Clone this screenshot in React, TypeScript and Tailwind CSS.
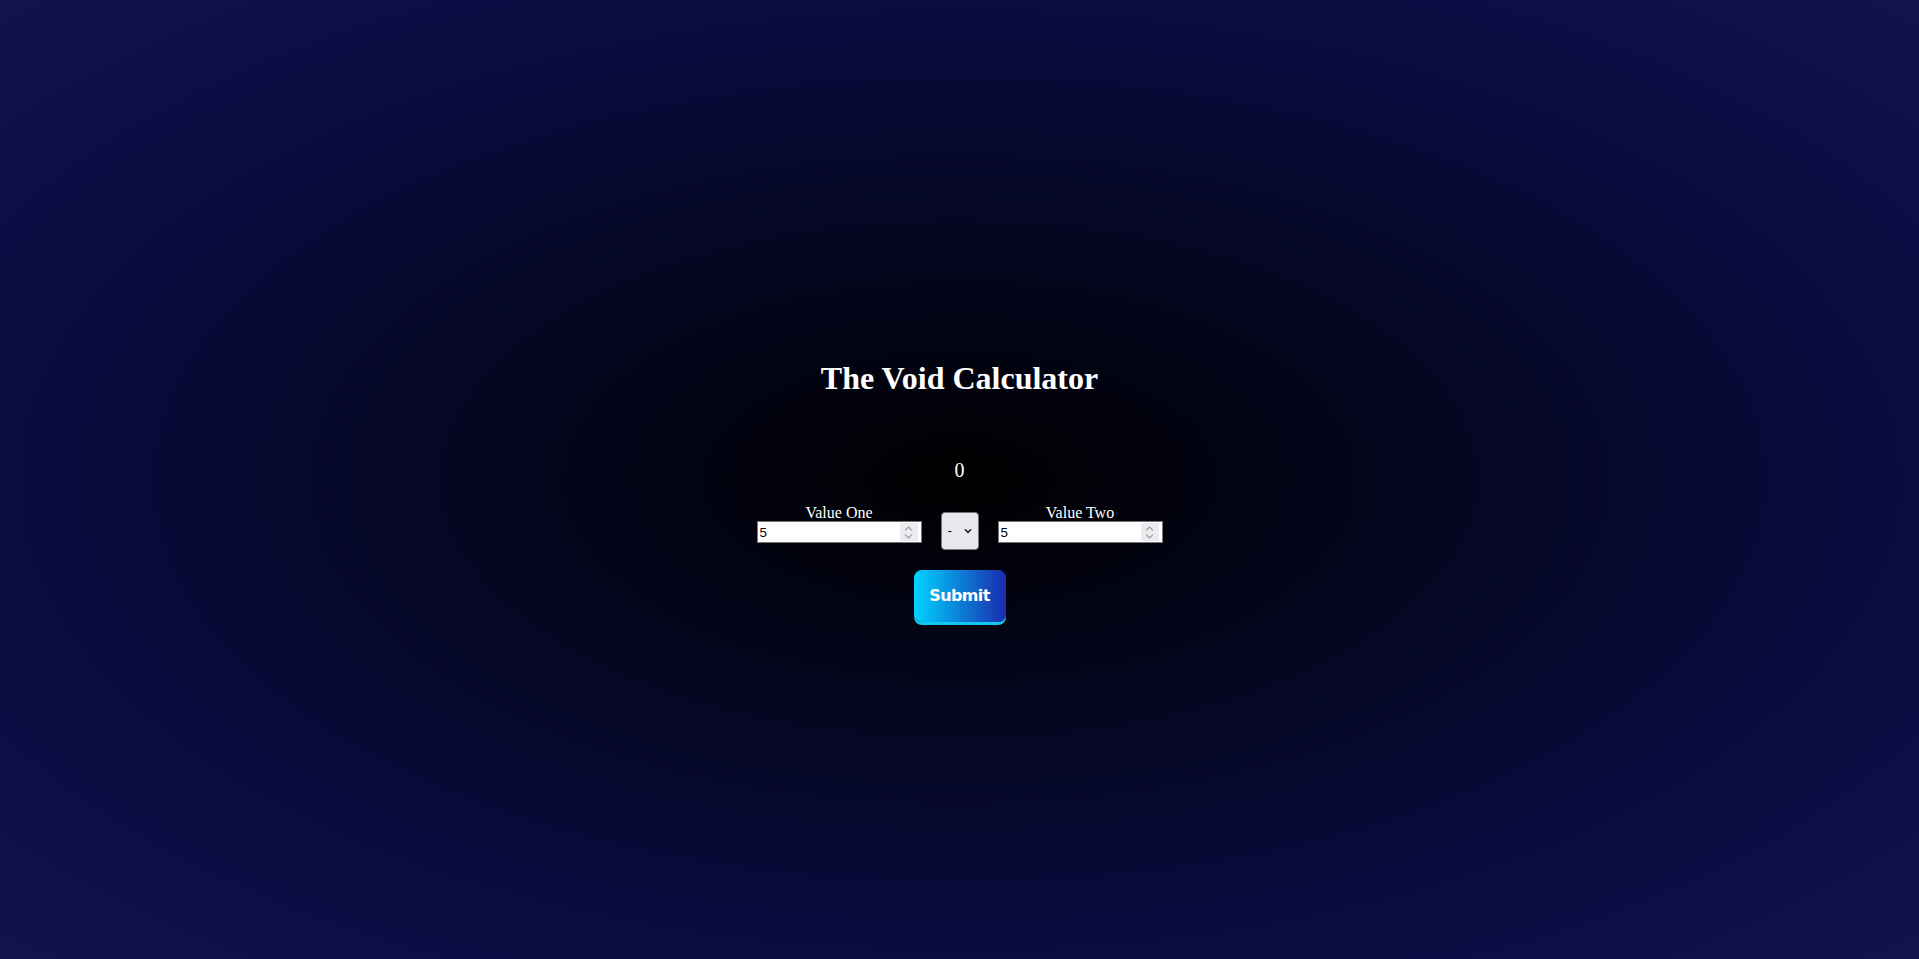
import { useState } from 'react';

function Spinner() {
  return (
    <div className="pointer-events-none absolute right-[4px] top-[2px] flex h-[18px] w-[18px] flex-col items-center justify-center gap-[3px] bg-[#ececf0]">
      <svg width="9" height="5" viewBox="0 0 9 5" fill="none">
        <path d="M1 4.5 L4.5 1 L8 4.5" stroke="#9d9da3" strokeWidth="1.1" />
      </svg>
      <svg width="9" height="5" viewBox="0 0 9 5" fill="none">
        <path d="M1 0.5 L4.5 4 L8 0.5" stroke="#9d9da3" strokeWidth="1.1" />
      </svg>
    </div>
  );
}

export default function App() {
  const [valueOne, setValueOne] = useState('5');
  const [valueTwo, setValueTwo] = useState('5');
  const [op, setOp] = useState('-');
  const [result, setResult] = useState(0);

  function submit() {
    const a = Number(valueOne);
    const b = Number(valueTwo);
    if (op === '+') setResult(a + b);
    else if (op === '-') setResult(a - b);
    else if (op === '*') setResult(a * b);
    else setResult(b === 0 ? 0 : a / b);
  }

  return (
    <div className="min-h-screen w-full bg-[radial-gradient(ellipse_at_center,#000000_0%,#06082c_48%,#0a0b40_70%,#13124f_100%)] text-white font-['Liberation_Serif','Times_New_Roman',serif]">
      <div className="flex flex-col items-center pt-[360px]">
        <h1 className="text-[32px] leading-[36px] font-bold">The Void Calculator</h1>

        <p className="mt-[62px] text-[20px] leading-[24px]">{result}</p>

        <div className="mt-[22px] flex items-start gap-[19px]">
          <div className="flex flex-col items-center">
            <label htmlFor="one" className="text-[16px] leading-[17px]">Value One</label>
            <div className="relative">
              <input
                id="one"
                type="number"
                value={valueOne}
                onChange={(e) => setValueOne(e.target.value)}
                className="block w-[165px] h-[22px] border border-[#767676] bg-white px-[2px] text-black text-[13.33px] font-['Liberation_Sans',Arial,sans-serif] [appearance:textfield] [&::-webkit-inner-spin-button]:appearance-none"
              />
              <Spinner />
            </div>
          </div>

          <div className="relative mt-[8px]">
            <select
              value={op}
              onChange={(e) => setOp(e.target.value)}
              className="block appearance-none w-[38px] h-[38px] rounded-[4px] border border-[#767676] bg-[#e9e9ed] pl-[6px] text-black text-[13.33px] font-['Liberation_Sans',Arial,sans-serif]"
            >
              <option value="+">+</option>
              <option value="-">-</option>
              <option value="*">*</option>
              <option value="/">/</option>
            </select>
            <svg className="pointer-events-none absolute right-[7px] top-[16px]" width="8" height="6" viewBox="0 0 8 6" fill="none">
              <path d="M1 1.2 L4 4.4 L7 1.2" stroke="#111" strokeWidth="1.4" />
            </svg>
          </div>

          <div className="flex flex-col items-center">
            <label htmlFor="two" className="text-[16px] leading-[17px]">Value Two</label>
            <div className="relative">
              <input
                id="two"
                type="number"
                value={valueTwo}
                onChange={(e) => setValueTwo(e.target.value)}
                className="block w-[165px] h-[22px] border border-[#767676] bg-white px-[2px] text-black text-[13.33px] font-['Liberation_Sans',Arial,sans-serif] [appearance:textfield] [&::-webkit-inner-spin-button]:appearance-none"
              />
              <Spinner />
            </div>
          </div>
        </div>

        <button
          onClick={submit}
          className="mt-[20px] w-[92px] h-[52px] rounded-[8px] bg-[linear-gradient(to_right,#00d4ff,#1a2aae)] shadow-[0_3px_0_#14c8f2] text-white text-[16px] font-bold tracking-[-0.6px] font-['DejaVu_Sans',Verdana,sans-serif]"
        >
          Submit
        </button>
      </div>
    </div>
  );
}
